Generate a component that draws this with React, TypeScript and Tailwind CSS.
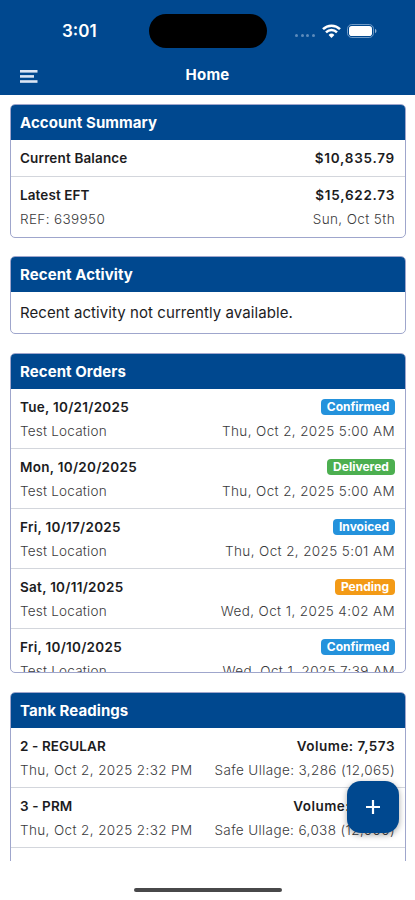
import type { ReactNode } from 'react';
import clsx from 'clsx';

type Status = 'Confirmed' | 'Delivered' | 'Invoiced' | 'Pending';

const statusStyles: Record<Status, string> = {
  Confirmed: 'bg-[#2492dc] w-[74px]',
  Delivered: 'bg-[#4caf50] w-[68px]',
  Invoiced: 'bg-[#2492dc] w-[62px]',
  Pending: 'bg-[#f39a16] w-[60px]',
};

const orders: { date: string; status: Status; placed: string }[] = [
  { date: 'Tue, 10/21/2025', status: 'Confirmed', placed: 'Thu, Oct 2, 2025 5:00 AM' },
  { date: 'Mon, 10/20/2025', status: 'Delivered', placed: 'Thu, Oct 2, 2025 5:00 AM' },
  { date: 'Fri, 10/17/2025', status: 'Invoiced', placed: 'Thu, Oct 2, 2025 5:01 AM' },
  { date: 'Sat, 10/11/2025', status: 'Pending', placed: 'Wed, Oct 1, 2025 4:02 AM' },
  { date: 'Fri, 10/10/2025', status: 'Confirmed', placed: 'Wed, Oct 1, 2025 7:39 AM' },
];

const tanks = [
  { name: '2 - REGULAR', volume: '7,573', ullage: '3,286 (12,065)', read: 'Thu, Oct 2, 2025 2:32 PM' },
  { name: '3 - PRM', volume: '4,820', ullage: '6,038 (12,000)', read: 'Thu, Oct 2, 2025 2:32 PM' },
];

export default function App() {
  return (
    <div className="flex h-[900px] w-[415px] flex-col overflow-hidden bg-white font-['Inter',sans-serif] text-[#1c1c1e]">
      <header className="h-[95px] shrink-0 bg-[#00488f] text-white">
        <StatusBar />
        <div className="grid h-[29px] grid-cols-3 items-center px-5">
          <MenuIcon />
          <h1 className="-mt-[2px] text-center text-[15px] font-bold tracking-[0.2px]">Home</h1>
        </div>
      </header>

      <main className="relative h-[766px] shrink-0">
        <div className="flex h-full flex-col gap-[19px] overflow-hidden pr-[9px] pl-[10px] pt-[9px]">
          <Card title="Account Summary" className="h-[134px]">
            <div className="flex h-[37px] items-center justify-between border-b border-[#d3d6dc] pr-[10px] pl-[9px] pt-px text-[13.5px] font-semibold">
              <span className="tracking-[0.15px]">Current Balance</span>
              <span className="tracking-[0.75px]">$10,835.79</span>
            </div>
            <Row
              title={<span className="tracking-[0.1px]">Latest EFT</span>}
              right={<span className="tracking-[0.75px]">$15,622.73</span>}
              sub="REF: 639950"
              subRight="Sun, Oct 5th"
            />
          </Card>

          <Card title="Recent Activity" className="h-[78px]">
            <p className="px-[9px] pt-[9px] text-[15px] leading-[24px] tracking-[0.07px]">
              Recent activity not currently available.
            </p>
          </Card>

          <Card title="Recent Orders" className="h-[320px]">
            {orders.map((order) => (
              <Row
                key={order.date}
                title={order.date}
                right={<Badge status={order.status} />}
                sub={<span className="tracking-[0.22px]">Test Location</span>}
                subRight={order.placed}
              />
            ))}
          </Card>

          <Card title="Tank Readings" className="h-[220px]">
            {tanks.map((tank) => (
              <Row
                key={tank.name}
                title={<span className="tracking-[0.1px]">{tank.name}</span>}
                right={<span className="tracking-[0.5px]">Volume: {tank.volume}</span>}
                sub={tank.read}
                subRight={`Safe Ullage: ${tank.ullage}`}
              />
            ))}
          </Card>
        </div>

        <button
          aria-label="Add"
          className="absolute right-[16px] bottom-[28px] flex size-[52px] items-center justify-center rounded-[14px] bg-[#00488f] text-white shadow-[0_2px_6px_rgba(0,0,0,0.35)]"
        >
          <svg width="14" height="14" viewBox="0 0 14 14" stroke="currentColor" strokeWidth="2.2">
            <path d="M7 0v14M0 7h14" />
          </svg>
        </button>
      </main>

      <footer className="flex grow items-center justify-center pt-[19px]">
        <div className="h-[4px] w-[148px] rounded-full bg-[#48484a]" />
      </footer>
    </div>
  );
}

function StatusBar() {
  return (
    <div className="flex h-[62px] items-center">
      <span className="w-[149px] pt-[2px] pl-[62px] text-[17px] font-semibold">3:01</span>
      <div className="h-[34px] w-[118px] rounded-full bg-black" />
      <div className="ml-[28px] mt-[9px] flex gap-[2.5px]">
        <i className="size-[3px] rounded-full bg-[#5c8bbb]" />
        <i className="size-[3px] rounded-full bg-[#5c8bbb]" />
        <i className="size-[3px] rounded-full bg-[#5c8bbb]" />
        <i className="size-[3px] rounded-full bg-[#5c8bbb]" />
      </div>
      <svg className="ml-[7px] -mt-px" width="19" height="14" viewBox="0 0 19 14" fill="none" stroke="white" strokeWidth="2.5">
        <path d="M1 5.1a12.2 12.2 0 0 1 17 0" />
        <path d="M4 8.3a7.9 7.9 0 0 1 11 0" />
        <path d="M9.5 14 6.6 11a4.1 4.1 0 0 1 5.8 0z" fill="white" stroke="none" />
      </svg>
      <svg className="ml-[6px]" width="30" height="14" viewBox="0 0 30 14">
        <rect x="0.5" y="0.5" width="26" height="13" rx="4.3" fill="none" stroke="#6f9ac6" />
        <rect x="2" y="2" width="23" height="10" rx="2.8" fill="white" />
        <path d="M28 4.8c2 .8 2 3.6 0 4.4z" fill="#8fb0d2" />
      </svg>
    </div>
  );
}

function MenuIcon() {
  return (
    <svg width="18" height="13" viewBox="0 0 18 13" fill="#dbe5f4">
      <rect width="17.5" height="2.6" />
      <rect y="5.1" width="14" height="2.6" />
      <rect y="10.2" width="17.5" height="2.6" />
    </svg>
  );
}

function Card({
  title,
  className,
  children,
}: {
  title: string;
  className?: string;
  children: ReactNode;
}) {
  return (
    <section
      className={clsx(
        'shrink-0 overflow-hidden rounded-[5px] border border-[#9fa6cc] first:-mb-px',
        className
      )}
    >
      <h2 className="flex h-[35px] items-center bg-[#00488f] px-[9px] pt-px text-[15px] font-bold tracking-[0.07px] text-white">
        {title}
      </h2>
      {children}
    </section>
  );
}

function Row({
  title,
  right,
  sub,
  subRight,
}: {
  title: ReactNode;
  right: ReactNode;
  sub: ReactNode;
  subRight: string;
}) {
  return (
    <div className="h-[60px] border-b border-[#d3d6dc] pr-[10px] pl-[9px] pt-[8px] [section:first-child>&]:border-b-0">
      <div className="flex h-[20px] items-center justify-between text-[13.5px] font-semibold tracking-[0.28px]">
        <span className="pt-px">{title}</span>
        <span>{right}</span>
      </div>
      <div className="mt-[3px] flex h-[22px] items-center justify-between text-[13.5px] font-light tracking-[0.38px] text-[#3a3a3c]">
        <span>{sub}</span>
        <span>{subRight}</span>
      </div>
    </div>
  );
}

function Badge({ status }: { status: Status }) {
  return (
    <span
      className={clsx(
        'flex h-[16px] items-center justify-center rounded-[4px] text-[12px] font-bold tracking-normal text-white',
        statusStyles[status]
      )}
    >
      {status}
    </span>
  );
}
